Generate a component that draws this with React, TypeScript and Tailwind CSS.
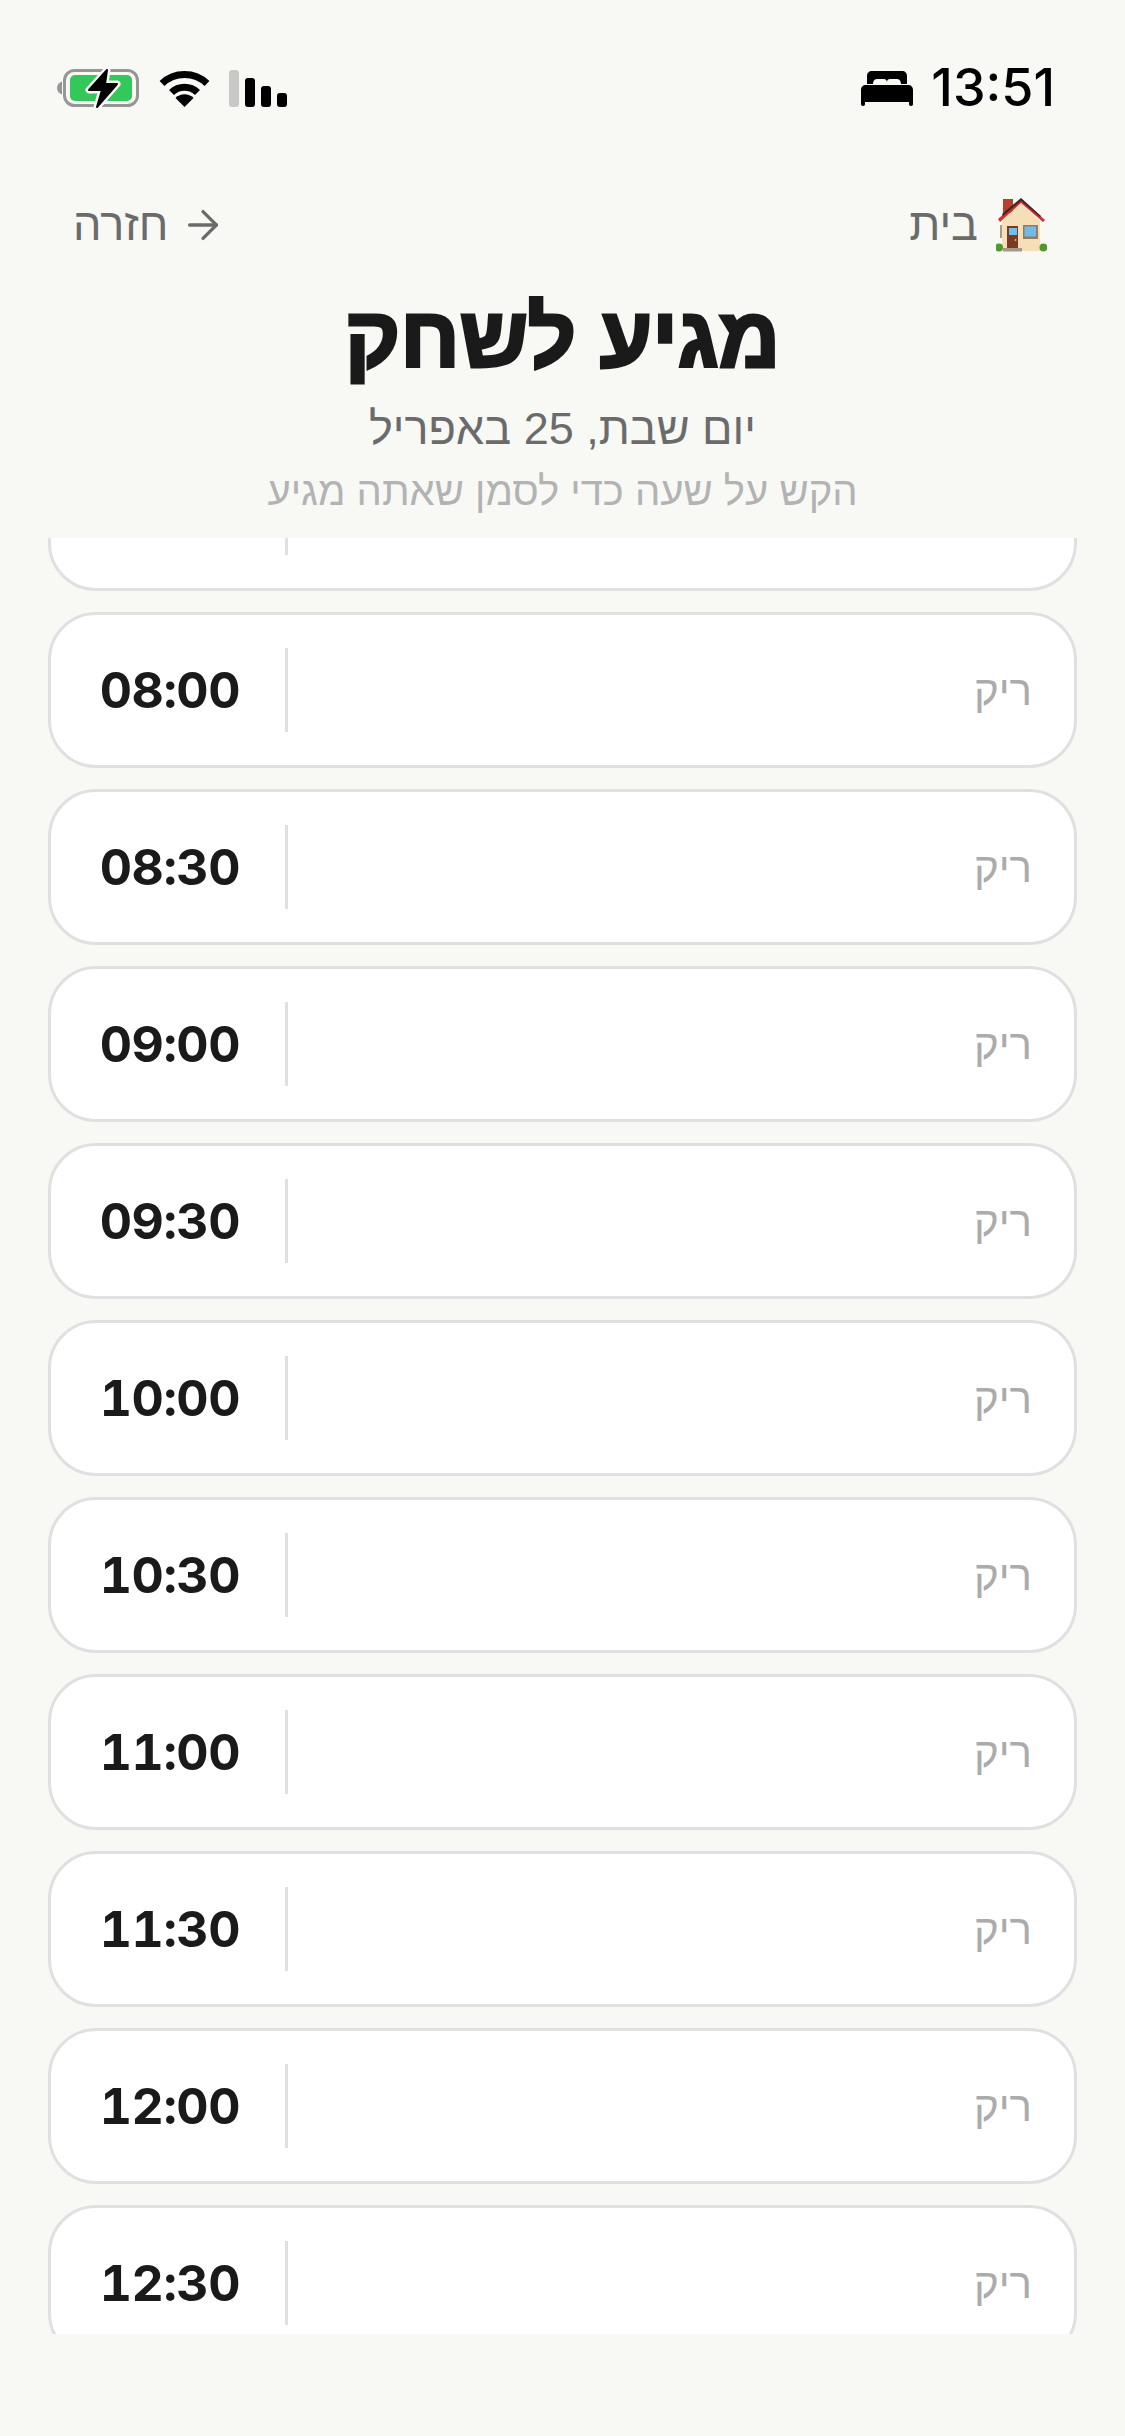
import React from "react"
import { ArrowRight } from "lucide-react"

const slots = ["07:30", "08:00", "08:30", "09:00", "09:30", "10:00", "10:30", "11:00", "11:30", "12:00", "12:30"]

function BedIcon() {
  return (
    <svg width="52" height="36" viewBox="0 0 52 36" fill="#000">
      <path d="M6 14V6c0-3 2-5 5-5h30c3 0 5 2 5 5v8h-6c0-2-1-5-4-5h-7c-2 0-3 1-3 3-.3-2-1.500-3-3-3h-7c-3 0-4 3-4 5z" />
      <path d="M5 15h42c3 0 5 2 5 5v14c0 1-.6 2-2 2s-2-.8-2-2v-2H4v2c0 1-.6 2-2 2s-2-.8-2-2V20c0-3 2-5 5-5z" />
    </svg>
  )
}

function SignalIcon() {
  return (
    <div className="flex items-end gap-[6px] h-[37px]">
      <div className="w-[10px] h-[37px] rounded-[3px] bg-[#c8c8c6]" />
      <div className="w-[10px] h-[29px] rounded-[3px] bg-black" />
      <div className="w-[10px] h-[21px] rounded-[3px] bg-black" />
      <div className="w-[10px] h-[14px] rounded-[3px] bg-black" />
    </div>
  )
}

function WifiIcon() {
  return (
    <svg width="51" height="37" viewBox="0 0 51 37" fill="none">
      <path d="M3 13.500C15.500 1.500 35.500 1.500 48 13.500" stroke="#000" strokeWidth="7" />
      <path d="M12.500 22.500C19.500 15.500 31.500 15.500 38.500 22.500" stroke="#000" strokeWidth="7" />
      <path d="M25.500 37L16.500 28c5-5 13-5 18 0z" fill="#000" />
    </svg>
  )
}

function BatteryIcon() {
  const bolt = "M50 4L32 24H45L40 41L60 18H48z"
  return (
    <svg width="83" height="44" viewBox="0 0 83 44" fill="none">
      <path d="M5 15.500c-3 1-5 3-5 6.500s2 5.500 5 6.500z" fill="#969696" />
      <rect x="7.500" y="4.500" width="73" height="35" rx="10" stroke="#969696" strokeWidth="3" />
      <rect x="13" y="9" width="62" height="26" rx="5" fill="#34c759" />
      <path d={bolt} stroke="#f8f9f5" strokeWidth="7" strokeLinejoin="round" />
      <path d={bolt} fill="#000" stroke="#000" strokeWidth="2" strokeLinejoin="round" />
    </svg>
  )
}

function HouseEmoji() {
  return (
    <svg width="51" height="54" viewBox="11 9 51 54">
      <rect x="18" y="10" width="10" height="14" fill="#b5402f" />
      <rect x="15" y="36" width="40" height="13" fill="#a89a84" />
      <path d="M17 32L36 14l19 18v30H17z" fill="#f5dfb8" />
      <path d="M13 30L36 9.500 60 31l-2 2L36 14 15 33z" fill="#d6302c" />
      <path d="M17 25L36 9l20 18-1 1L36 12 18 27z" fill="#3a2a28" />
      <rect x="22" y="37" width="11" height="22" fill="#7c3a22" />
      <rect x="24" y="39" width="8" height="7" fill="#6fc0ea" />
      <circle cx="30.500" cy="51" r="1" fill="#f0c040" />
      <rect x="38" y="36" width="15" height="14" fill="#9a7a5a" />
      <rect x="39.500" y="37.500" width="11.500" height="10" fill="#6fbce8" />
      <rect x="18" y="59" width="19" height="3.500" fill="#a59a8a" />
      <circle cx="14" cy="58.500" r="4" fill="#4f9a2a" />
      <circle cx="58.500" cy="58.500" r="4" fill="#4f9a2a" />
    </svg>
  )
}

export default function App() {
  return (
    <div dir="rtl" className="w-[1125px] h-[2436px] overflow-hidden bg-[#f8f9f5] font-['Liberation_Sans',sans-serif] text-[#1a1a1a] flex flex-col">
      {/* status bar */}
      <div className="h-[180px] pr-[70px] pl-[57px] pt-[60px] flex items-start justify-between">
        <div className="flex items-center gap-[18px] h-[56px]">
          <span dir="ltr" className="font-['Inter',sans-serif] font-medium text-[52px] leading-none text-black">13:51</span>
          <BedIcon />
        </div>
        <div dir="ltr" className="flex items-center gap-[19px] h-[56px]">
          <BatteryIcon />
          <WifiIcon />
          <SignalIcon />
        </div>
      </div>

      {/* nav */}
      <div className="flex items-center justify-between pl-[73px] pr-[78px] h-[90px] text-[45px] text-[#6b6b6b]">
        <div className="flex items-center gap-[18px]">
          <HouseEmoji />
          <span>בית</span>
        </div>
        <div className="flex items-center gap-[12px]">
          <ArrowRight size={46} strokeWidth={1.7} />
          <span>חזרה</span>
        </div>
      </div>

      {/* title */}
      <div className="text-center">
        <h1 className="text-[85px] leading-[96px] mt-[20px] font-bold [-webkit-text-stroke:3px_#1a1a1a]">מגיע לשחק</h1>
        <p className="text-[45px] leading-[54px] mt-[16px] text-[#6b6b6b]">יום שבת, 25 באפריל</p>
        <p className="text-[40px] leading-[46px] mt-[12px] text-[#b3b3b3]">הקש על שעה כדי לסמן שאתה מגיע</p>
      </div>

      {/* slots */}
      <div className="mt-[24px] h-[1796px] overflow-hidden px-[48px]">
        <div className="-mt-[103px] flex flex-col gap-[21px]">
          {slots.map((time) => (
            <div key={time} className="h-[156px] shrink-0 bg-white border-[3px] border-[#e0e0e0] rounded-[48px] pr-[42px] pl-[45px] flex items-center">
              <span className="flex-1 text-[42px] text-[#ababab]">ריק</span>
              <div className="w-[3px] h-[84px] bg-[#e0e0e0]" />
              <span dir="ltr" className="w-[189px] pr-[45px] text-right font-['Inter',sans-serif] font-bold text-[50px] tracking-[-0.5px] tabular-nums leading-none">{time}</span>
            </div>
          ))}
        </div>
      </div>
    </div>
  )
}
